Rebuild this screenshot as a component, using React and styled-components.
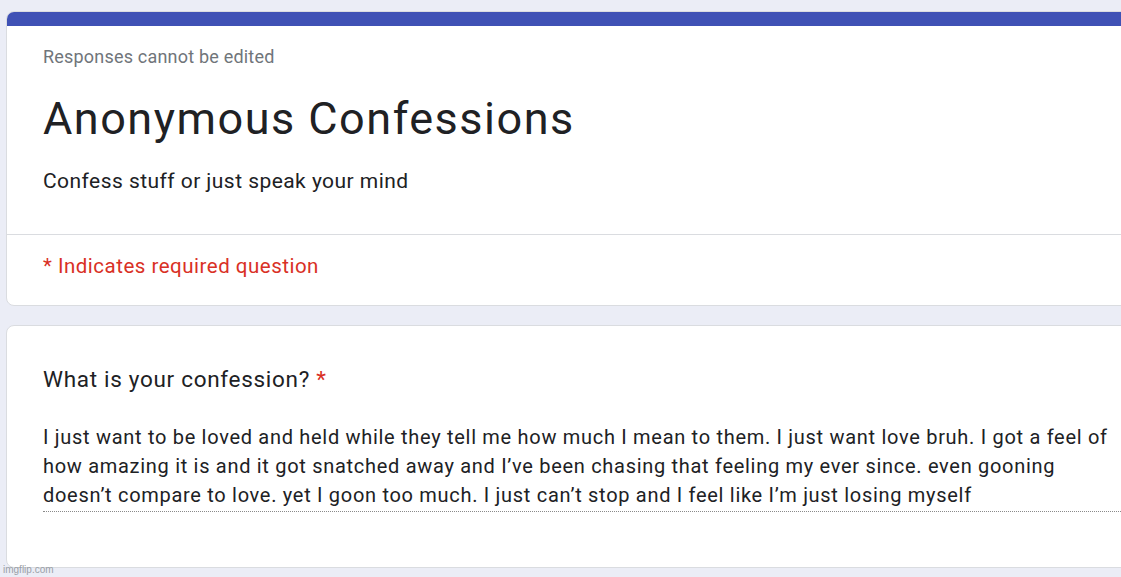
import styled, { createGlobalStyle } from 'styled-components';

const GlobalStyle = createGlobalStyle`
  html, body {
    margin: 0;
    padding: 0;
    background: #ebedf6;
    overflow: hidden;
  }
  body {
    font-family: Roboto, 'Noto Sans', sans-serif;
    color: #202124;
  }
`;

const Page = styled.div`
  width: 1121px;
  height: 577px;
  padding: 11px 0 0 6px;
  box-sizing: border-box;
  display: flex;
  flex-direction: column;
  gap: 19px;
  position: relative;
  overflow: hidden;
`;

const Card = styled.div`
  width: 1140px;
  background: #fff;
  border: 1px solid #dadce0;
  border-radius: 8px;
  box-sizing: border-box;
  overflow: hidden;
  flex-shrink: 0;
`;

const TopBar = styled.div`
  height: 15px;
  margin: -1px -1px 0;
  background: #3f51b5;
`;

const Header = styled.div`
  padding: 20px 36px 39px;
`;

const Note = styled.div`
  font-size: 18px;
  color: #70757a;
  letter-spacing: 0.2px;
  line-height: 22px;
`;

const Title = styled.h1`
  margin: 23px 0 0;
  font-size: 45px;
  font-weight: 400;
  letter-spacing: 1.5px;
  line-height: 56px;
  color: #202124;
`;

const Description = styled.div`
  margin-top: 20px;
  font-size: 21px;
  letter-spacing: 0.45px;
  line-height: 28px;
`;

const Divider = styled.div`
  height: 1px;
  background: #dadce0;
`;

const Required = styled.div`
  padding: 17px 36px 25px;
  font-size: 20.5px;
  letter-spacing: 0.5px;
  line-height: 28px;
  color: #d93025;
`;

const QuestionCard = styled(Card)`
  height: 243px;
  padding: 38px 0 0 36px;
`;

const Question = styled.div`
  font-size: 22.5px;
  letter-spacing: 0.7px;
  line-height: 30px;
  color: #202124;
`;

const Star = styled.span`
  color: #d93025;
`;

const Answer = styled.div`
  margin-top: 29px;
  width: 1100px;
  border-bottom: 1px dotted #8a8a8a;
  padding-bottom: 1px;
`;

const AnswerText = styled.div`
  width: 1082px;
  font-size: 20px;
  letter-spacing: 0.7px;
  line-height: 29px;
  color: #202124;
`;

const Watermark = styled.div`
  position: absolute;
  left: 3px;
  bottom: 2px;
  font-family: 'Liberation Sans', Arial, sans-serif;
  font-size: 10px;
  color: #9aa0a6;
`;

export default function App() {
  return (
    <>
      <GlobalStyle />
      <Page>
        <Card>
          <TopBar />
          <Header>
            <Note>Responses cannot be edited</Note>
            <Title>Anonymous Confessions</Title>
            <Description>Confess stuff or just speak your mind</Description>
          </Header>
          <Divider />
          <Required>* Indicates required question</Required>
        </Card>
        <QuestionCard>
          <Question>
            What is your confession? <Star>*</Star>
          </Question>
          <Answer>
            <AnswerText>
              I just want to be loved and held while they tell me how much I mean to them. I just want love bruh. I got a feel of how amazing it is and it got snatched away and I’ve been chasing that feeling my ever since. even gooning doesn’t compare to love. yet I goon too much. I just can’t stop and I feel like I’m just losing myself
            </AnswerText>
          </Answer>
        </QuestionCard>
        <Watermark>imgflip.com</Watermark>
      </Page>
    </>
  );
}
